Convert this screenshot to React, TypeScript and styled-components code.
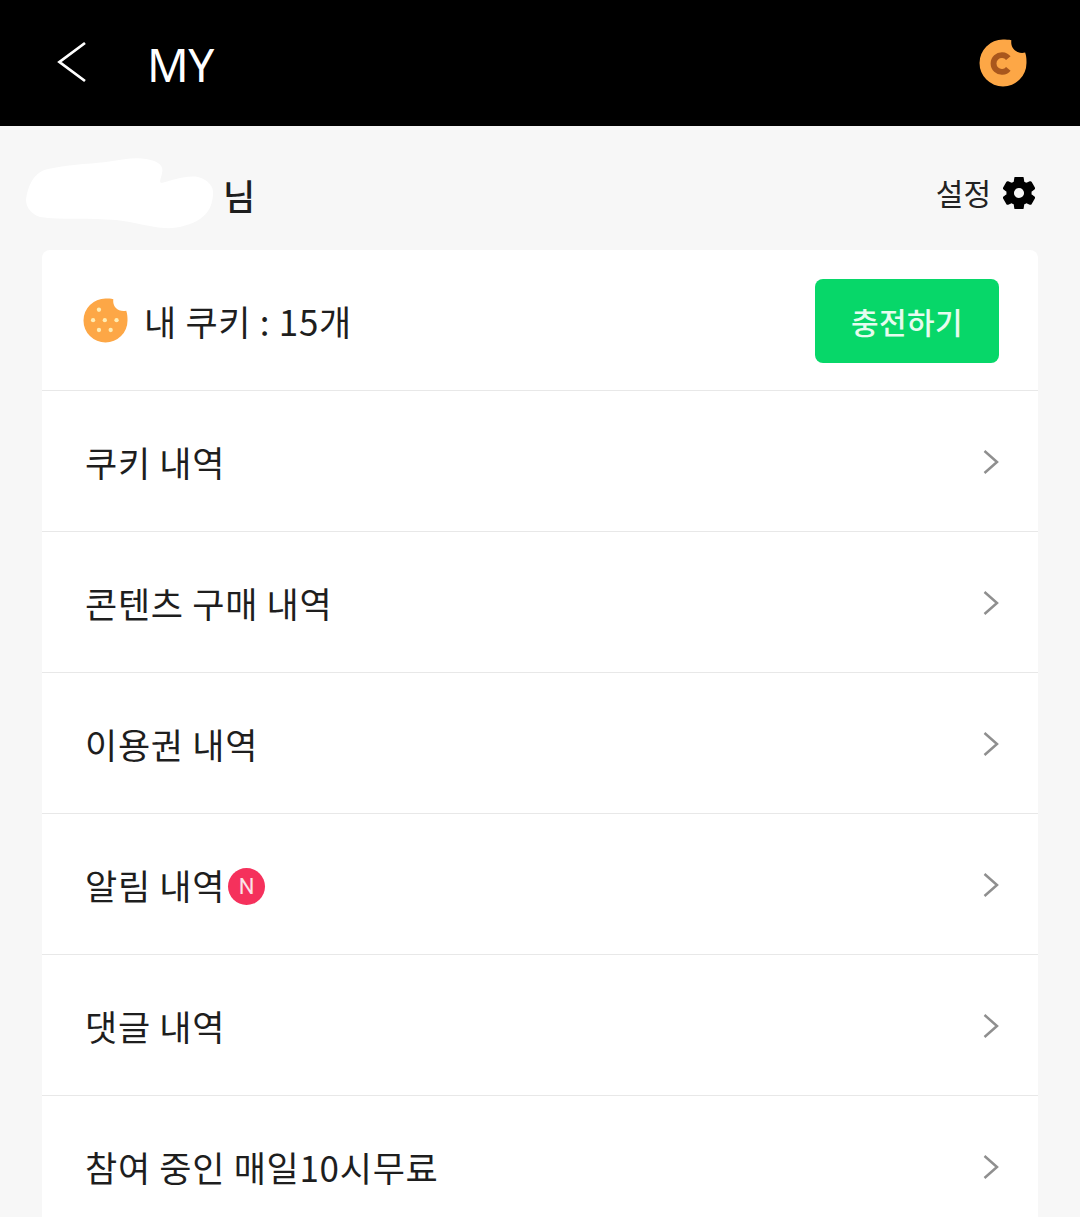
import React from "react";
import styled, { createGlobalStyle } from "styled-components";

const Global = createGlobalStyle`
  html, body { margin: 0; padding: 0; background: #f7f7f7; }
  body { font-family: "Noto Sans CJK KR", "Noto Sans", sans-serif; color: #1e1e1e; }
`;
const Page = styled.div`
  width: 1080px;
  height: 1217px;
  overflow: hidden;
  background: #f7f7f7;
`;
const TopBar = styled.header`
  height: 126px;
  background: #000;
  display: flex;
  align-items: center;
  padding: 0 53px 0 56px;
`;
const BackButton = styled.svg`
  width: 32px;
  height: 42px;
  flex: none;
  margin-right: 59px;
  margin-top: -2px;
`;
const Title = styled.h1`
  margin: 2px 0 0;
  flex: 1;
  font: 400 46px/1 "Noto Sans", sans-serif;
  letter-spacing: -0.5px;
  color: #fff;
`;
const NameRow = styled.div`
  box-sizing: border-box;
  height: 124px;
  display: flex;
  align-items: center;
  padding: 10px 45px 0 26px;
`;
const Blob = styled.svg`
  width: 188px;
  height: 72px;
  flex: none;
  margin-right: 9px;
`;
const UserSuffix = styled.span`
  font-size: 35px;
  font-weight: 500;
  flex: 1;
  margin-top: 2px;
  color: #1e1e1e;
`;
const SettingsLabel = styled.span`
  font-size: 30px;
  color: #222;
  margin: -2px 12px 0 0;
`;
const Gear = styled.svg`
  width: 32px;
  height: 32px;
`;
const Card = styled.section`
  margin: 0 42px;
  background: #fff;
  border-radius: 8px 8px 0 0;
`;
const CookieRow = styled.div`
  height: 140px;
  display: flex;
  align-items: center;
  padding: 0 39px 0 41px;
  border-bottom: 1px solid #e8e8e8;
`;
const CookieLabel = styled.span`
  flex: 1;
  margin-left: 16px;
  font-size: 35px;
  letter-spacing: 0.7px;
  color: #1e1e1e;
`;
const ChargeButton = styled.button`
  width: 184px;
  height: 84px;
  margin-top: 2px;
  border: 0;
  border-radius: 8px;
  background: #07d769;
  color: #e6fcef;
  font: 500 30px "Noto Sans CJK KR", sans-serif;
  letter-spacing: 0.4px;
`;
const MenuRow = styled.div<{ $last?: boolean }>`
  height: 140px;
  display: flex;
  align-items: center;
  padding: 0 38px 0 43px;
  border-bottom: ${(p) => (p.$last ? "0" : "1px solid #e8e8e8")};
`;
const MenuLabel = styled.span`
  flex: 1;
  display: flex;
  align-items: center;
  font-size: 35px;
  letter-spacing: 0.7px;
  color: #1e1e1e;
  white-space: pre;
`;
const NewBadge = styled.span`
  width: 37px;
  height: 37px;
  margin: 5px 0 0 3px;
  border-radius: 50%;
  background: #f5315c;
  color: #fbe3e8;
  display: flex;
  align-items: center;
  justify-content: center;
  font: 400 22px Roboto, sans-serif;
  letter-spacing: 0;
`;
const Chevron = styled.svg`
  width: 18px;
  height: 26px;
  flex: none;
  margin-top: 2px;
`;

const BiteCookie = ({ size, children }: { size: number; children?: React.ReactNode }) => (
  <svg width={size} height={size} viewBox="0 0 46 46" style={{ flex: "none" }}>
    <path
      d="M23 0.5 C25.5 0.5 28.5 0.6 31 1.2 C30.5 5 31.5 10 37 12.5 C39.5 13.5 42 13.5 44.2 13 C45.2 15.8 45.6 19 45.5 23 A22.5 22.5 0 1 1 23 0.5 Z"
      fill="#fda746"
    />
    {children}
  </svg>
);

const rows = ["쿠키 내역", "콘텐츠 구매 내역", "이용권 내역", "알림 내역", "댓글 내역", "참여 중인 매일10시무료"];
const dots = [[16.3, 12], [10.3, 22.7], [22.3, 22.7], [34.3, 22.7], [16.3, 32.7], [28.3, 32.7]];

export default function App() {
  return (
    <Page>
      <Global />
      <TopBar>
        <BackButton viewBox="0 0 32 42">
          <path d="M29 2 L3.5 21 L29 40" fill="none" stroke="#fff" strokeWidth="2.8" />
        </BackButton>
        <Title>MY</Title>
        <BiteCookie size={48}>
          <path d="M28.1 18.4 A8 8 0 1 0 28.1 28.6" fill="none" stroke="#a9571d" strokeWidth="5.6" />
        </BiteCookie>
      </TopBar>
      <NameRow>
        <Blob viewBox="0 0 188 72">
          <path
            d="M0 43 C2 28 8 15 22 12 C40 8 60 7 80 5 C95 3 108 0 120 2 C134 4 138 10 136 16 C135 22 133 24 135 26 C145 24 160 18 172 20 C183 23 188 30 187 38 C186 50 182 56 174 62 C165 68 150 72 138 71 C122 70 110 65 90 63 C65 61 35 63 14 60 C5 57 0 50 0 43 Z"
            fill="#fff"
          />
        </Blob>
        <UserSuffix>님</UserSuffix>
        <SettingsLabel>설정</SettingsLabel>
        <Gear viewBox="2.2 2.2 19.6 19.6">
          <path
            fill="#000"
            stroke="#000"
            strokeWidth="1"
            fillRule="evenodd"
            d="M19.14 12.94c.04-.3.06-.61.06-.94 0-.32-.02-.64-.07-.94l2.03-1.58a.49.49 0 0 0 .12-.61l-1.92-3.32a.49.49 0 0 0-.59-.22l-2.39.96c-.5-.38-1.03-.7-1.62-.94l-.36-2.54a.48.48 0 0 0-.48-.41h-3.84a.48.48 0 0 0-.47.41l-.36 2.54c-.59.24-1.13.57-1.62.94l-2.39-.96a.49.49 0 0 0-.59.22L2.74 8.87a.48.48 0 0 0 .12.61l2.03 1.58c-.05.3-.09.63-.09.94s.02.64.07.94l-2.03 1.58a.49.49 0 0 0-.12.61l1.92 3.32c.12.22.37.29.59.22l2.39-.96c.5.38 1.03.7 1.62.94l.36 2.54c.05.24.24.41.48.41h3.84c.24 0 .44-.17.47-.41l.36-2.54c.59-.24 1.13-.56 1.62-.94l2.39.96c.22.08.47 0 .59-.22l1.92-3.32a.48.48 0 0 0-.12-.61l-2.01-1.58zM12 15.6A3.6 3.6 0 1 1 12 8.4a3.6 3.6 0 0 1 0 7.2z"
          />
        </Gear>
      </NameRow>
      <Card>
        <CookieRow>
          <BiteCookie size={45}>
            {dots.map(([x, y]) => (
              <circle key={`${x}-${y}`} cx={x} cy={y} r="2.2" fill="#ffedb4" />
            ))}
          </BiteCookie>
          <CookieLabel>내 쿠키 : 15개</CookieLabel>
          <ChargeButton>충전하기</ChargeButton>
        </CookieRow>
        {rows.map((r, i) => (
          <MenuRow key={r} $last={i === rows.length - 1}>
            <MenuLabel>
              {r}
              {r === "알림 내역" && <NewBadge>N</NewBadge>}
            </MenuLabel>
            <Chevron viewBox="0 0 18 26">
              <path d="M2.5 2 L15 13 L2.5 24" fill="none" stroke="#8f8f8f" strokeWidth="2.5" />
            </Chevron>
          </MenuRow>
        ))}
      </Card>
    </Page>
  );
}
